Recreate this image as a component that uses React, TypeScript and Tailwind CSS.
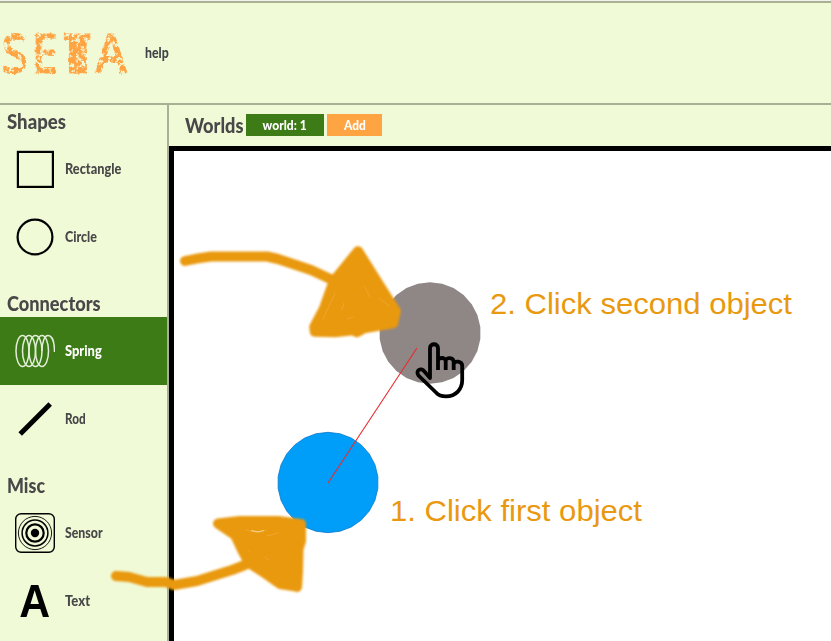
import React from "react";

const polygonPoints = (cx: number, cy: number, r: number, sides = 26) =>
  Array.from({ length: sides }, (_, i) => {
    const a = ((i + 0.5) * 2 * Math.PI) / sides;
    return `${(cx + r * Math.cos(a)).toFixed(2)},${(cy + r * Math.sin(a)).toFixed(2)}`;
  }).join(" ");

const hand = "font-['Lato','Open_Sans',sans-serif] font-black whitespace-nowrap inline-block origin-left";

function Logo() {
  return (
    <svg width="130" height="80" viewBox="0 -15 130 80" className="block shrink-0">
      <defs>
        <filter id="rough" x="0" y="0" width="145" height="50" filterUnits="userSpaceOnUse">
          <feTurbulence type="fractalNoise" baseFrequency="0.2" numOctaves="3" seed="8" result="n" />
          <feColorMatrix in="n" type="matrix" values="0 0 0 0 0  0 0 0 0 0  0 0 0 0 0  6 0 0 0 -2" result="holes" />
          <feComposite in="SourceGraphic" in2="holes" operator="in" result="worn" />
          <feDisplacementMap in="worn" in2="n" scale="3" xChannelSelector="R" yChannelSelector="G" />
        </filter>
      </defs>
      <g filter="url(#rough)" transform="scale(0.9 1)" fill="#ffa443" stroke="#ffa443" strokeWidth="0.8">
        <text x="1.5 35 70.5 105.5" y="45" fontFamily="Open Sans, sans-serif" fontWeight="600" fontSize="54">
          SETA
        </text>
        <rect x="77" y="7" width="19" height="38" />
      </g>
    </svg>
  );
}

const icons: Record<string, React.ReactNode> = {
  Rectangle: <rect x="2.9" y="2.9" width="35" height="35" fill="none" stroke="#000" strokeWidth="2.2" />,
  Circle: <circle cx="20" cy="20" r="17.4" fill="none" stroke="#000" strokeWidth="2.2" />,
  Spring: (
    <g fill="none" stroke="#e3eed9" strokeWidth="1.5">
      <ellipse cx="7.5" cy="20" rx="6.5" ry="15.5" />
      <ellipse cx="14" cy="20" rx="6.5" ry="15.5" />
      <ellipse cx="20.5" cy="20" rx="6.5" ry="15.5" />
      <ellipse cx="27" cy="20" rx="6.5" ry="15.5" />
      <path d="M27 20 C27 10 30 4.5 33 4.5 C37 4.5 39.5 11 39.5 21" />
    </g>
  ),
  Rod: <path d="M5.2 35 L35.2 5" stroke="#000" strokeWidth="5" />,
  Sensor: (
    <g fill="none" stroke="#000">
      <rect x="0.7" y="0.7" width="38.6" height="38.6" rx="5.5" strokeWidth="1.4" />
      <circle cx="20" cy="20" r="16.6" strokeWidth="0.9" />
      <circle cx="20" cy="20" r="12.9" strokeWidth="1.5" />
      <circle cx="20" cy="20" r="8.7" strokeWidth="2.2" />
      <circle cx="20" cy="20" r="4.2" fill="#000" stroke="none" />
    </g>
  ),
};

function Heading({ text, scale, first }: { text: string; scale: string; first?: boolean }) {
  return (
    <div className={`flex pl-[7px] text-[21px] leading-[30px] ${first ? "h-[30px] pt-px" : "h-[46px] pt-[17px]"}`}>
      <span className={`${hand} ${scale}`}>{text}</span>
    </div>
  );
}

function Item({ name, scale, active }: { name: string; scale: string; active?: boolean }) {
  return (
    <div className={`flex h-[68px] items-center pl-[15px] ${active ? "bg-[#3d7b16] text-white" : ""}`}>
      {name === "Text" ? (
        <span className="w-10 shrink-0 text-center font-['Liberation_Sans',sans-serif] text-[46px] font-bold leading-10 text-black">
          <span className="inline-block scale-x-[0.93]">A</span>
        </span>
      ) : (
        <svg width="40" height="40" viewBox="0 0 40 40" className="shrink-0">
          {icons[name]}
        </svg>
      )}
      <span className={`${hand} mb-0.5 ml-[10px] text-[15px] leading-5 ${scale}`}>{name}</span>
    </div>
  );
}

function Annotations() {
  return (
    <svg width="831" height="641" viewBox="0 0 831 641" className="pointer-events-none absolute inset-0">
      <defs>
        <filter id="brush" x="-10%" y="-10%" width="120%" height="120%">
          <feGaussianBlur stdDeviation="1.1" />
        </filter>
      </defs>
      <polygon points={polygonPoints(430, 333, 50.7)} fill="#8f8686" />
      <polygon points={polygonPoints(328, 482.5, 50.2)} fill="#009ef8" stroke="#0878cc" strokeWidth="0.8" />
      <path d="M328 483 L417 348" stroke="#e92a2e" strokeWidth="1.1" />
      <g filter="url(#brush)" stroke="#e9990f" fill="none" strokeLinecap="round" strokeLinejoin="round">
        <path d="M185 261 Q198 258 211 256.5 H267 L278 259 L311 270 L339 283" strokeWidth="10" />
        <path d="M358 251.5 L379 285 L395.5 311 L393 323 L364 328 L357 332 L353 330 L335 332 L315 331.5 L314.5 327 L324 309 L334 281 Z" fill="#e9990f" strokeWidth="10.5" />
        <path d="M116 576 L129 577 L147 582 H166 L174 585 L197 581 L216 575 L232 570 L245 565" strokeWidth="10" />
        <path d="M218 523.5 L240 521 H278 L301 524 L301 541 L298.5 549 L298 572 L297 587 L293 586 L280 584 L263 572 L249 563 L242 550 L235 535 Z" fill="#e9990f" strokeWidth="10" />
      </g>
      <g fill="none" stroke="#f2b44d" strokeWidth="1" strokeLinecap="round" opacity=".5">
        <path d="M335 293 L323 319 M365 287 L370 297 M379 298 L389 306 M342 310 L344 303 M347 319 L353 317" />
        <path d="M246 530 Q258 534 266 530 M267 536 L278 533 M248 550 L250 552 M265 557 L269 560" />
      </g>
      <path d="M251 530.5 L258 532 L264 530.5" stroke="#f6ddb0" strokeWidth="1.2" fill="none" opacity=".8" />
      <path
        d="M438 368 V348 C438 343 430 343 430 348 V378 L424 371 C421 367 415 371 418.5 375.5 L436 392.5 C439 396 442 396.4 446 396.4 C456 396.4 462.2 389 462.2 380 V366 C462.2 360.5 454 360.5 453.7 364 M438 361 C438 357 445.7 357 445.7 361 V370 M445.7 361 C445.7 357 453.7 357 453.7 362 V370 M438 361 V370"
        fill="none"
        stroke="#000"
        strokeWidth="3.8"
        strokeLinejoin="round"
      />
      <g fill="#e9990f" fontFamily="Liberation Sans, Arial, sans-serif" fontSize="30">
        <text x="490" y="314" textLength="302" lengthAdjust="spacingAndGlyphs">2. Click second object</text>
        <text x="390" y="521" textLength="252" lengthAdjust="spacingAndGlyphs">1. Click first object</text>
      </g>
    </svg>
  );
}

export default function App() {
  return (
    <div className="relative flex h-[641px] w-[831px] flex-col overflow-hidden bg-[#f0fad7] text-[#484849]">
      <div className="h-px shrink-0 bg-[#f1f2ee]" />
      <header className="flex h-[104px] shrink-0 items-center border-y-2 border-[#a9b195]">
        <Logo />
        <span className={`${hand} mb-0.5 ml-[15px] scale-x-[0.82] text-[15px] leading-5 text-[#3e4549]`}>help</span>
      </header>
      <div className="flex min-h-0 flex-1">
        <aside className="w-[169px] shrink-0 border-r-2 border-[#a9b195]">
          <Heading text="Shapes" scale="scale-x-[0.885]" first />
          <Item name="Rectangle" scale="scale-x-[0.85]" />
          <Item name="Circle" scale="scale-x-[0.83]" />
          <Heading text="Connectors" scale="scale-x-[0.865]" />
          <Item name="Spring" scale="scale-x-[0.86]" active />
          <Item name="Rod" scale="scale-x-[0.78]" />
          <Heading text="Misc" scale="scale-x-[0.85]" />
          <Item name="Sensor" scale="scale-x-[0.82]" />
          <Item name="Text" scale="scale-x-[0.87]" />
        </aside>
        <main className="flex min-w-0 flex-1 flex-col">
          <div className="flex h-[41px] shrink-0 items-center pb-0.5 pl-4">
            <div className="w-[61px] text-[21px] leading-[30px]">
              <span className={`${hand} scale-x-[0.865]`}>Worlds</span>
            </div>
            <button className="mr-[3px] flex h-[22px] w-[78px] items-center justify-center bg-[#3d7b16] text-[14px] text-white">
              <span className="inline-block scale-x-[0.86] whitespace-nowrap font-['Lato',sans-serif] font-black">world: 1</span>
            </button>
            <button className="flex h-[22px] w-[55px] items-center justify-center bg-[#ffa443] text-[14px] text-white">
              <span className="inline-block scale-x-[0.85] font-['Lato',sans-serif] font-black">Add</span>
            </button>
          </div>
          <div className="flex-1 border-l-[5px] border-t-[5px] border-black bg-white" />
        </main>
      </div>
      <Annotations />
    </div>
  );
}
